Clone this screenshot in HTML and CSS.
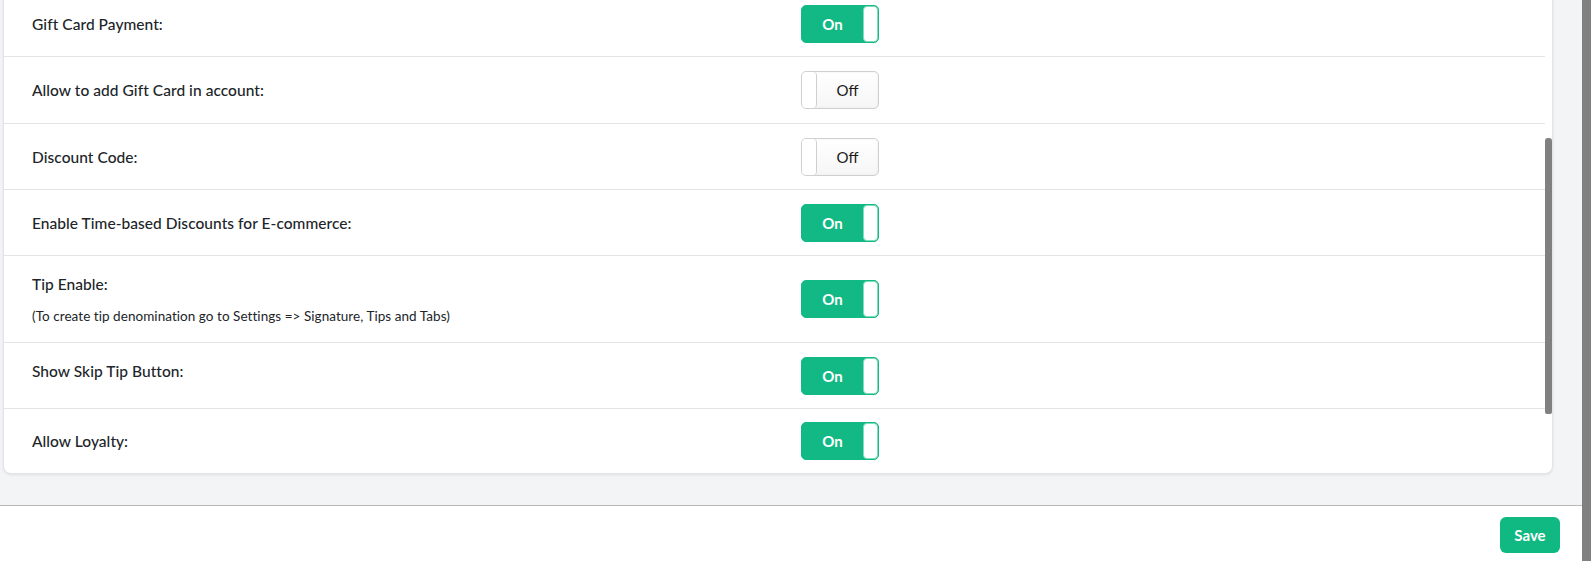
FILE: index.html
```html
<!DOCTYPE html>
<html lang="en">
<head>
  <meta charset="UTF-8" />
  <title>Payment Settings</title>
  <link rel="stylesheet" href="styles.css">
</head>
<body>

<div class="page">
  <div class="main">
    <div class="content">
      <div class="card">
        <div class="rows">
          <div class="row">
            <div class="label">Gift Card Payment:</div>
            <div class="toggle on"><span class="toggle-text">On</span><span class="knob"></span></div>
          </div>
          <div class="row wide">
            <div class="label">Allow to add Gift Card in account:</div>
            <div class="toggle off"><span class="knob"></span><span class="toggle-text">Off</span></div>
          </div>
          <div class="row">
            <div class="label">Discount Code:</div>
            <div class="toggle off"><span class="knob"></span><span class="toggle-text">Off</span></div>
          </div>
          <div class="row">
            <div class="label">Enable Time-based Discounts for E-commerce:</div>
            <div class="toggle on"><span class="toggle-text">On</span><span class="knob"></span></div>
          </div>
          <div class="row tall">
            <div class="label">
              Tip Enable:
              <div class="hint">(To create tip denomination go to Settings =&gt; Signature, Tips and Tabs)</div>
            </div>
            <div class="toggle on"><span class="toggle-text">On</span><span class="knob"></span></div>
          </div>
          <div class="row">
            <div class="label raised">Show Skip Tip Button:</div>
            <div class="toggle on"><span class="toggle-text">On</span><span class="knob"></span></div>
          </div>
          <div class="row last">
            <div class="label">Allow Loyalty:</div>
            <div class="toggle on"><span class="toggle-text">On</span><span class="knob"></span></div>
          </div>
        </div>
        <div class="card-scroll">
          <div class="card-thumb"></div>
        </div>
      </div>
    </div>
    <footer class="footer">
      <button class="save">Save</button>
    </footer>
  </div>
  <div class="page-scroll"></div>
</div>

</body>
</html>
```

FILE: styles.css
```css
body {
  margin: 0;
  font-family: Lato, "Noto Sans", sans-serif;
  color: #212529;
  background: #f3f4f6;
}
.page {
  display: flex;
  height: 561px;
  overflow: hidden;
}
.main {
  flex: 1;
  display: flex;
  flex-direction: column;
}
.content {
  flex: 1;
  background: #f3f4f6;
  padding: 0 29px 0 3px;
  overflow: hidden;
}
.card {
  margin-top: -10px;
  display: flex;
  background: white;
  border: 1px solid #e3e4e8;
  border-radius: 8px;
  box-shadow: 0 1px 3px rgba(0,0,0,0.08);
}
.rows {
  flex: 1;
}
.row {
  display: grid;
  grid-template-columns: 769px auto;
  align-items: center;
  height: 65px;
  padding-left: 28px;
  border-bottom: 1px solid #e4e4e4;
}
.row.wide {
  height: 66px;
}
.row.tall {
  height: 86px;
}
.row.last {
  border-bottom: none;
  height: 64px;
}
.label {
  font-size: 15.5px;
  font-weight: 500;
  letter-spacing: 0.05px;
}
.label.raised {
  padding-bottom: 10px;
}
.hint {
  font-size: 13.5px;
  font-weight: normal;
  margin-top: 15px;
}
.card-scroll {
  width: 7px;
}
.card-thumb {
  margin-top: 147px;
  height: 276px;
  background: #808080;
  border-radius: 3px 3px 2px 2px;
}
.toggle {
  box-sizing: border-box;
  width: 78px;
  height: 38px;
  display: flex;
  border-radius: 5px;
  font-size: 15px;
  overflow: hidden;
}
.toggle-text {
  flex: 1;
  display: flex;
  align-items: center;
  justify-content: center;
}
.toggle.on {
  background: #13b984;
  border: 1px solid #13b984;
  color: white;
  font-weight: bold;
}
.toggle.on .knob {
  width: 13px;
  background: white;
  border: 1px solid #7fdcbc;
  border-radius: 4px;
}
.toggle.off {
  background: linear-gradient(#ffffff, #f6f6f6);
  border: 1px solid #cfcfcf;
  color: #1a1a1a;
  box-shadow: inset 0 0 3px rgba(0,0,0,0.06);
}
.toggle.off .knob {
  width: 14px;
  background: white;
  border-right: 1px solid #cfcfcf;
  border-radius: 4px;
}
.footer {
  height: 53px;
  background: white;
  border-top: 1px solid #b8b8b8;
  display: flex;
  justify-content: flex-end;
  align-items: center;
  padding: 2px 22px 0 0;
}
.save {
  width: 60px;
  height: 36px;
  background: #10b981;
  color: white;
  border: none;
  border-radius: 6px;
  font-family: Lato, sans-serif;
  font-weight: bold;
  font-size: 15px;
  cursor: pointer;
}
.page-scroll {
  width: 9px;
  background: #808080;
}
```
